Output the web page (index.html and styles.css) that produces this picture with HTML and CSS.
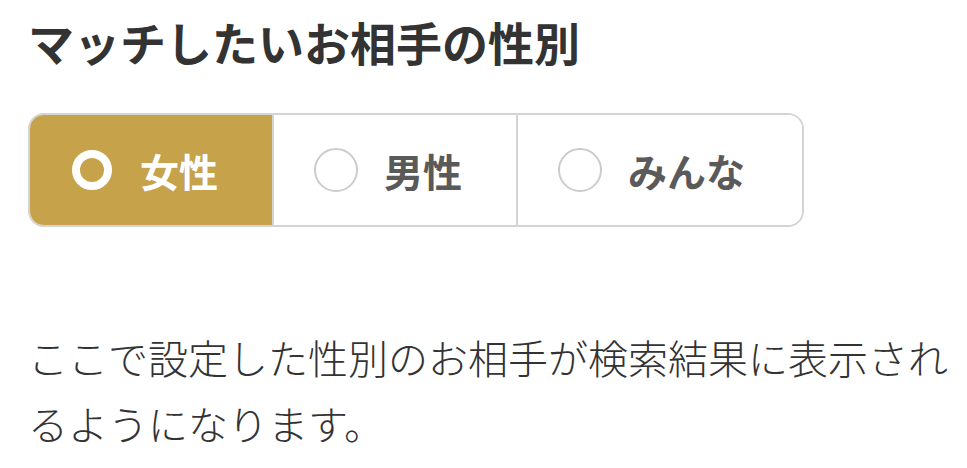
FILE: index.html
```html
<!DOCTYPE html>
<html lang="ja">
<head>
<meta charset="utf-8">
<title>マッチしたいお相手の性別</title>
<link rel="stylesheet" href="styles.css">
</head>
<body>
<main class="page">
  <h1 class="title">マッチしたいお相手の性別</h1>
  <div class="segmented" role="radiogroup">
    <div class="seg is-selected" role="radio" aria-checked="true">
      <span class="radio"></span><span class="seg-label">女性</span>
    </div>
    <div class="seg" role="radio" aria-checked="false">
      <span class="radio"></span><span class="seg-label">男性</span>
    </div>
    <div class="seg" role="radio" aria-checked="false">
      <span class="radio"></span><span class="seg-label">みんな</span>
    </div>
  </div>
  <p class="note">ここで設定した性別のお相手が検索結果に表示されるようになります。</p>
</main>
</body>
</html>
```

FILE: styles.css
```css
html, body {
  margin: 0;
  padding: 0;
  background: #ffffff;
}

body {
  font-family: "Noto Sans CJK JP", "Noto Sans", sans-serif;
  color: #333333;
}

.page {
  padding: 14px 10px 0 28px;
}

.title {
  margin: 0;
  font-size: 46px;
  line-height: 54px;
  font-weight: 700;
  color: #333333;
}

.segmented {
  display: inline-flex;
  margin-top: 45px;
  border: 2px solid #d4d4d4;
  border-radius: 16px;
  overflow: hidden;
  height: 110px;
}

.seg {
  display: flex;
  align-items: center;
  gap: 26px;
  padding: 0 54px 0 40px;
  background: #ffffff;
}

.seg + .seg {
  border-left: 2px solid #d4d4d4;
}

.seg:last-child {
  padding-right: 57px;
}

.seg.is-selected {
  background: #c6a24b;
}

.radio {
  box-sizing: border-box;
  width: 44px;
  height: 44px;
  border-radius: 50%;
  border: 2px solid #cccccc;
  flex: none;
}

.is-selected .radio {
  width: 40px;
  height: 40px;
  margin: 0 2px;
  border: 8px solid #ffffff;
}

.seg-label {
  font-size: 39px;
  line-height: 1;
  font-weight: 700;
  color: #5a5a5a;
  white-space: nowrap;
}

.is-selected .seg-label {
  color: #ffffff;
}

.note {
  margin: 97px 0 0;
  font-size: 40px;
  line-height: 66px;
  font-weight: 300;
  color: #333333;
}
```
